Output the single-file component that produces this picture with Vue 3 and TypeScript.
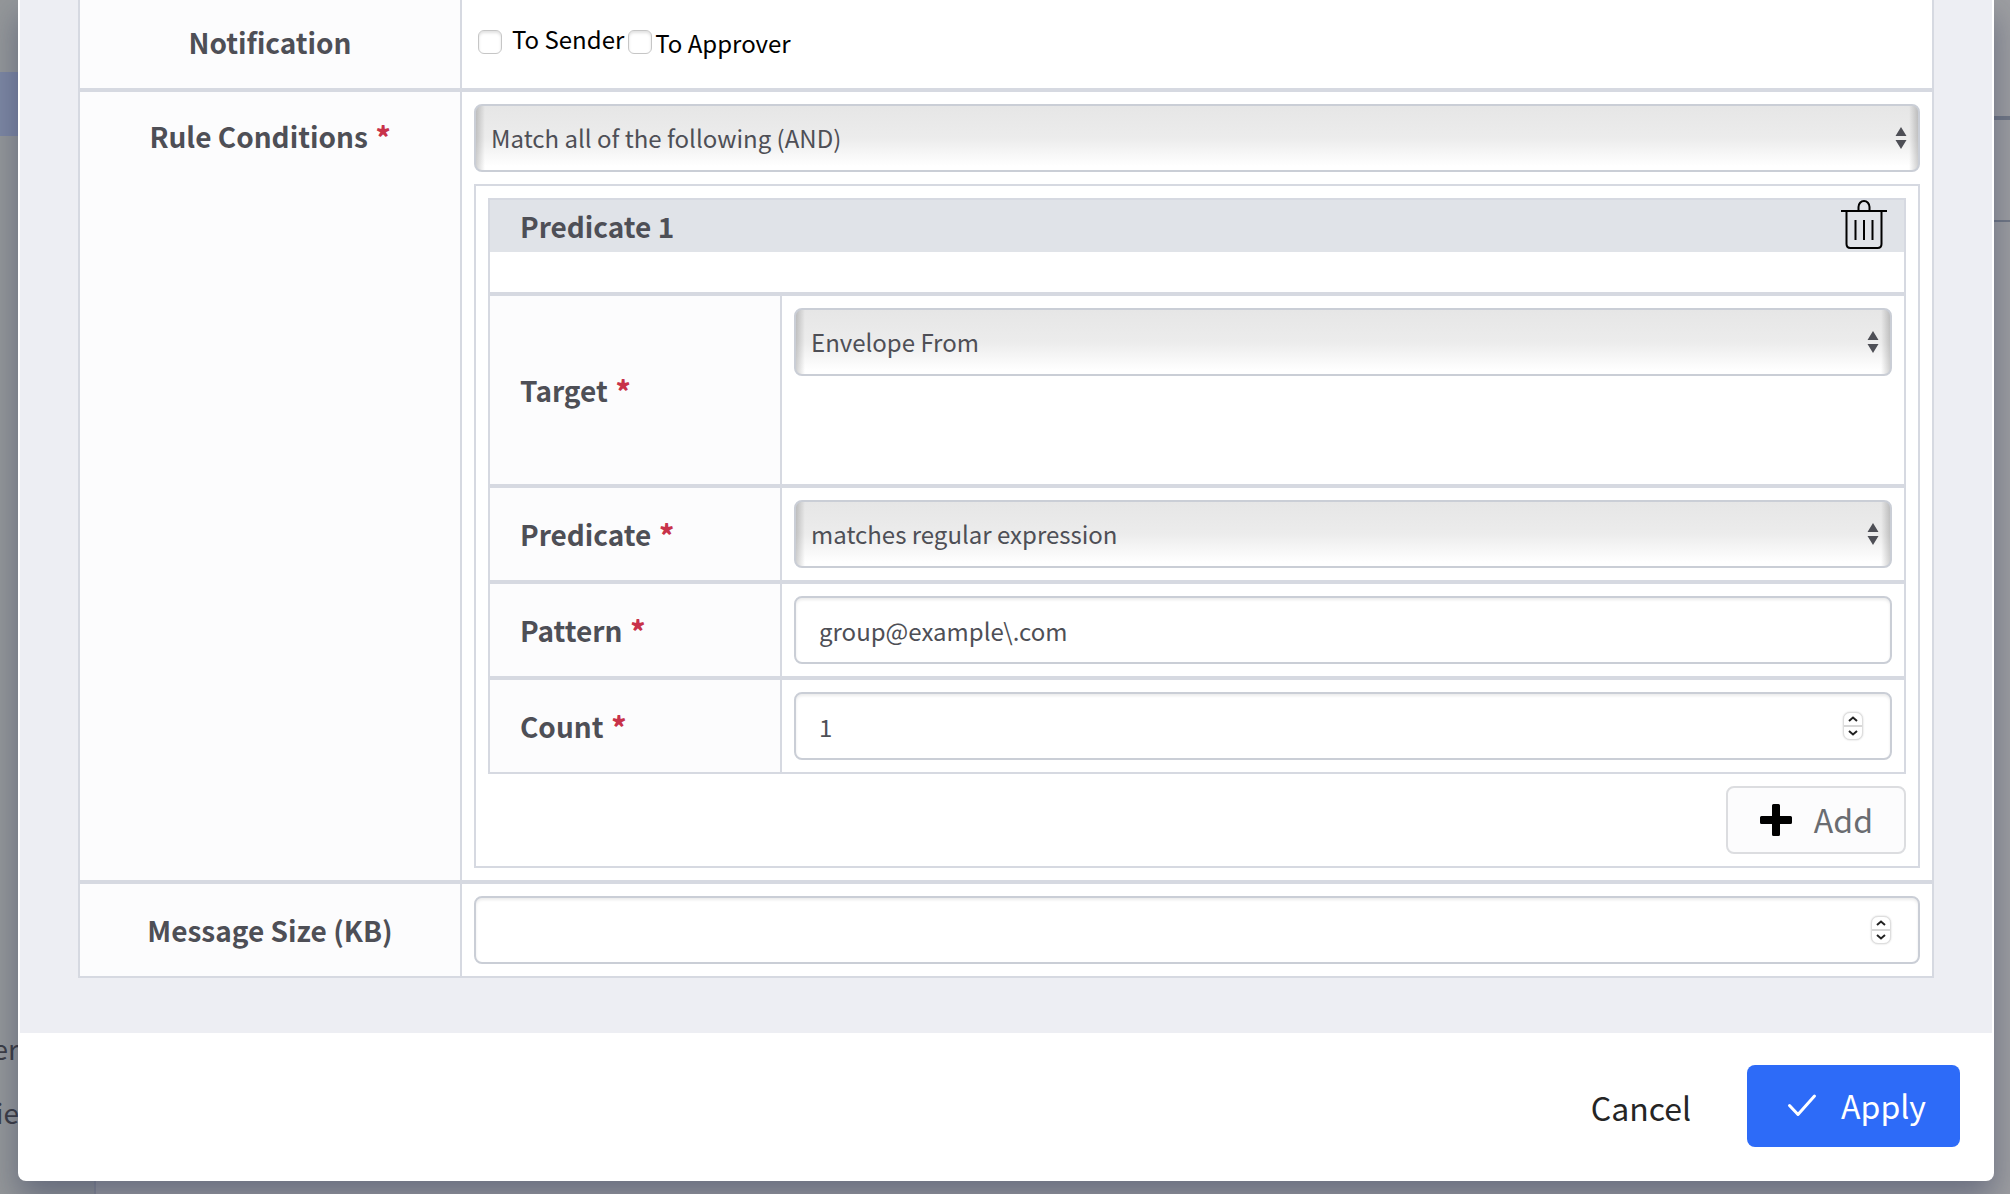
<script setup lang="ts">
import { ref } from 'vue'

const toSender = ref(false)
const toApprover = ref(false)
const operator = ref('and')
const target = ref('from')
const predicate = ref('regex')
const pattern = ref('group@example\\.com')
const count = ref<number | null>(1)
const messageSize = ref<number | null>(null)

function step(current: number | null, by: number): number {
  return Math.max(0, (current || 0) + by)
}
</script>

<template>
  <div class="page">
    <div class="backdrop">
      <nav class="side">
        <div class="side-active"></div>
        <div class="side-links">
          <a href="#">er</a>
          <a href="#">ie</a>
        </div>
      </nav>
      <div class="behind">
        <div class="line thick"></div>
        <div class="line thin"></div>
      </div>
    </div>

    <form class="modal" @submit.prevent>
      <div class="body">
        <div class="grid outer">
          <div class="row notify">
            <div class="label">Notification</div>
            <div class="cell checks">
              <label class="check first"><input v-model="toSender" type="checkbox" /><span>To Sender</span></label>
              <label class="check"><input v-model="toApprover" type="checkbox" /><span>To Approver</span></label>
            </div>
          </div>

          <div class="row">
            <label class="label top" for="operator">Rule Conditions <b>*</b></label>
            <div class="cell stack">
              <div class="select">
                <select id="operator" v-model="operator">
                  <option value="and">Match all of the following (AND)</option>
                  <option value="or">Match any of the following (OR)</option>
                </select>
                <svg viewBox="0 0 12 22"><path d="M0.500 9 6 0l5.500 9zM0.500 13 6 22l5.500-9z" /></svg>
              </div>

              <div class="group">
                <div class="grid inner">
                  <div class="head">
                    <div class="head-bar">
                      <h3>Predicate 1</h3>
                      <button type="button" class="trash" aria-label="Delete predicate">
                        <svg viewBox="0 0 48 50">
                          <path d="M18.500 10V7a5.500 6 0 0 1 11 0v3M6.500 11v33q0 4 4 4h27q4 0 4-4V11M15.500 20v20M24 20v20M32.500 20v20" />
                          <path d="M1 11h46" />
                        </svg>
                      </button>
                    </div>
                  </div>
                  <div class="row">
                    <label class="label" for="target">Target <b>*</b></label>
                    <div class="cell tall">
                      <div class="select">
                        <select id="target" v-model="target">
                          <option value="from">Envelope From</option>
                          <option value="to">Envelope To</option>
                        </select>
                        <svg viewBox="0 0 12 22"><path d="M0.500 9 6 0l5.500 9zM0.500 13 6 22l5.500-9z" /></svg>
                      </div>
                    </div>
                  </div>
                  <div class="row">
                    <label class="label" for="predicate">Predicate <b>*</b></label>
                    <div class="cell">
                      <div class="select">
                        <select id="predicate" v-model="predicate">
                          <option value="regex">matches regular expression</option>
                          <option value="contains">contains</option>
                        </select>
                        <svg viewBox="0 0 12 22"><path d="M0.500 9 6 0l5.500 9zM0.500 13 6 22l5.500-9z" /></svg>
                      </div>
                    </div>
                  </div>
                  <div class="row">
                    <label class="label" for="pattern">Pattern <b>*</b></label>
                    <div class="cell"><input id="pattern" v-model="pattern" class="field" type="text" /></div>
                  </div>
                  <div class="row">
                    <label class="label" for="count">Count <b>*</b></label>
                    <div class="cell number">
                      <input id="count" v-model="count" class="field" type="number" />
                      <span class="spinner">
                        <button type="button" aria-label="Increase count" @click="count = step(count, 1)">
                          <svg viewBox="0 0 10 6"><path d="M1 5l4-3.500L9 5" /></svg>
                        </button>
                        <button type="button" aria-label="Decrease count" @click="count = step(count, -1)">
                          <svg viewBox="0 0 10 6"><path d="M1 1l4 3.500L9 1" /></svg>
                        </button>
                      </span>
                    </div>
                  </div>
                </div>
                <button type="button" class="add">
                  <svg viewBox="0 0 32 32">
                    <path d="M13.500 0h5a1.500 1.500 0 0 1 1.500 1.500V12h10.500a1.500 1.500 0 0 1 1.500 1.500v5a1.500 1.500 0 0 1-1.500 1.500H20v10.500a1.500 1.500 0 0 1-1.500 1.500h-5a1.500 1.500 0 0 1-1.500-1.500V20H1.500A1.500 1.500 0 0 1 0 18.500v-5A1.500 1.500 0 0 1 1.500 12H12V1.500A1.500 1.500 0 0 1 13.500 0z" />
                  </svg>
                  <span>Add</span>
                </button>
              </div>
            </div>
          </div>

          <div class="row">
            <label class="label" for="size">Message Size (KB)</label>
            <div class="cell number">
              <input id="size" v-model="messageSize" class="field" type="number" />
              <span class="spinner">
                <button type="button" aria-label="Increase message size" @click="messageSize = step(messageSize, 1)">
                  <svg viewBox="0 0 10 6"><path d="M1 5l4-3.500L9 5" /></svg>
                </button>
                <button type="button" aria-label="Decrease message size" @click="messageSize = step(messageSize, -1)">
                  <svg viewBox="0 0 10 6"><path d="M1 1l4 3.500L9 1" /></svg>
                </button>
              </span>
            </div>
          </div>
        </div>
      </div>

      <div class="footer">
        <button type="button" class="cancel">Cancel</button>
        <button type="submit" class="apply">
          <svg viewBox="0 0 30 24"><path d="M2.500 12.500 11 21.500 27.500 3" /></svg>
          <span>Apply</span>
        </button>
      </div>
    </form>
  </div>
</template>

<style>
body {
  background: #9b9ca0;
}
</style>

<style scoped>
.page,
.page * {
  box-sizing: border-box;
}
.page {
  position: relative;
  min-height: 100vh;
  padding: 0 16px 13px 18px;
  overflow: hidden;
  color: #4e4f56;
  font-family: "Noto Sans CJK SC", "Noto Sans", sans-serif;
  font-size: 24px;
  line-height: 36px;
}
button,
input,
select {
  margin: 0;
  font: inherit;
}
.backdrop {
  position: absolute;
  inset: 0;
  display: flex;
  background: #9d9ea1;
}
.side {
  flex: none;
  width: 96px;
  padding-top: 72px;
  background: #949799;
  border-right: 2px solid #8a8d96;
}
.side-active {
  height: 64px;
  background: #7d87a3;
}
.side-links {
  display: flex;
  flex-direction: column;
  align-items: flex-end;
  gap: 28px;
  width: 19px;
  padding-top: 894px;
}
.side-links a {
  color: #3c3d44;
  font-size: 28px;
  text-decoration: none;
}
.behind {
  flex: 1;
  padding-top: 116px;
}
.line {
  background: #717885;
}
.thick {
  height: 4px;
}
.thin {
  height: 2px;
  margin-top: 100px;
}
.modal {
  position: relative;
  padding: 0 2px;
  background: #fff;
  border-radius: 0 0 8px 8px;
  box-shadow: 0 16px 32px rgba(30, 40, 80, 0.4);
}
.body {
  padding: 0 58px 55px;
  background: #edeef3;
}
.grid {
  background: #fff;
  border: 2px solid #d6d9e1;
}
.outer {
  border-top: 0;
}
.row {
  display: flex;
}
.row + .row,
.head + .row {
  border-top: 4px solid #d6d9e1;
}
.label {
  display: flex;
  flex: none;
  align-items: center;
  justify-content: center;
  gap: 8px;
  width: 382px;
  background: #fcfcfd;
  border-right: 2px solid #d6d9e1;
  font-size: 28px;
  font-weight: 700;
}
.label b {
  color: #c8324a;
}
.top {
  align-items: flex-start;
  padding-top: 26px;
}
.inner .label {
  justify-content: flex-start;
  width: 292px;
  padding-left: 30px;
}
.cell {
  flex: 1;
  min-width: 0;
  padding: 12px;
}
.notify {
  height: 88px;
}
.notify .label {
  padding-bottom: 4px;
}
.checks {
  display: flex;
  align-items: flex-start;
  gap: 4px;
  padding: 24px 16px;
  color: #000;
}
.check {
  display: flex;
  align-items: flex-start;
  gap: 3px;
  line-height: 38px;
}
.first {
  gap: 10px;
  line-height: 30px;
}
.check input {
  appearance: none;
  width: 24px;
  height: 24px;
  margin-top: 6px;
  background: #fff;
  border: 1px solid #c6c6c6;
  border-radius: 6px;
  box-shadow: inset 0 2px 3px rgba(0, 0, 0, 0.12);
}
.stack {
  display: flex;
  flex-direction: column;
  gap: 12px;
}
.select {
  position: relative;
}
.select select {
  display: block;
  width: 100%;
  height: 68px;
  padding: 0 40px 0 15px;
  color: #4e4f56;
  appearance: none;
  background:
    linear-gradient(90deg, rgba(0, 0, 0, 0.18), transparent) left / 9px 100% no-repeat,
    linear-gradient(270deg, rgba(0, 0, 0, 0.18), transparent) right / 9px 100% no-repeat,
    linear-gradient(#e6e6e6, #ececec 50%, #fff 94%);
  border: 2px solid #caced6;
  border-radius: 8px;
}
.select svg {
  position: absolute;
  top: 23px;
  right: 13px;
  width: 12px;
  height: 22px;
  fill: #4e4f56;
  pointer-events: none;
}
.group {
  display: flex;
  flex-direction: column;
  gap: 12px;
  padding: 12px;
  border: 2px solid #d6d9e1;
}
.head {
  padding-bottom: 40px;
}
.head-bar {
  display: flex;
  align-items: center;
  justify-content: space-between;
  height: 52px;
  padding: 0 16px 0 30px;
  background: #e0e3e8;
}
.head h3 {
  margin: 0;
  font-size: 28px;
}
.trash {
  height: 52px;
  padding: 0 0 2px;
  background: none;
  border: 0;
}
.trash svg {
  display: block;
  width: 48px;
  height: 50px;
  fill: none;
  stroke: #000;
  stroke-width: 2;
}
.tall {
  padding-bottom: 108px;
}
.field {
  display: block;
  width: 100%;
  height: 68px;
  padding: 0 23px;
  color: #4e4f56;
  background: #fff;
  border: 2px solid #caced6;
  border-radius: 8px;
  box-shadow: inset 0 2px 3px rgba(0, 0, 0, 0.08);
}
.number {
  position: relative;
}
.number input {
  appearance: textfield;
}
.number input::-webkit-inner-spin-button {
  appearance: none;
}
.spinner {
  position: absolute;
  top: 32px;
  right: 41px;
  display: flex;
  flex-direction: column;
  width: 20px;
  height: 28px;
  overflow: hidden;
  background: #fff;
  border: 1px solid #dedede;
  border-radius: 7px;
  box-shadow: 0 0 2px rgba(0, 0, 0, 0.2);
}
.spinner button {
  display: flex;
  flex: 1;
  align-items: center;
  justify-content: center;
  padding: 0;
  background: none;
  border: 0;
}
.spinner button + button {
  border-top: 2px solid #d8d8d8;
}
.spinner svg {
  width: 10px;
  height: 6px;
  fill: none;
  stroke: #222;
  stroke-width: 2;
}
.add {
  display: flex;
  align-items: center;
  align-self: flex-end;
  gap: 22px;
  height: 68px;
  padding: 0 31px 0 32px;
  color: #6a6c71;
  background: #fcfcfd;
  border: 2px solid #dcdde0;
  border-radius: 8px;
  font-size: 32px;
}
.add span,
.apply span {
  padding-bottom: 2px;
}
.add svg {
  width: 32px;
  height: 32px;
}
.footer {
  display: flex;
  align-items: center;
  justify-content: flex-end;
  gap: 32px;
  padding: 32px 32px 34px;
}
.cancel {
  padding: 2px 24px 0;
  color: #252525;
  background: none;
  border: 0;
  font-size: 32px;
}
.apply {
  display: flex;
  align-items: center;
  gap: 24px;
  height: 82px;
  padding: 0 34px 0 40px;
  color: #fff;
  background: #2d6bf8;
  border: 0;
  border-radius: 8px;
  font-size: 32px;
}
.apply svg {
  width: 30px;
  height: 24px;
  margin-bottom: 2px;
  fill: none;
  stroke: #fff;
  stroke-width: 3;
  stroke-linecap: round;
  stroke-linejoin: round;
}
</style>
